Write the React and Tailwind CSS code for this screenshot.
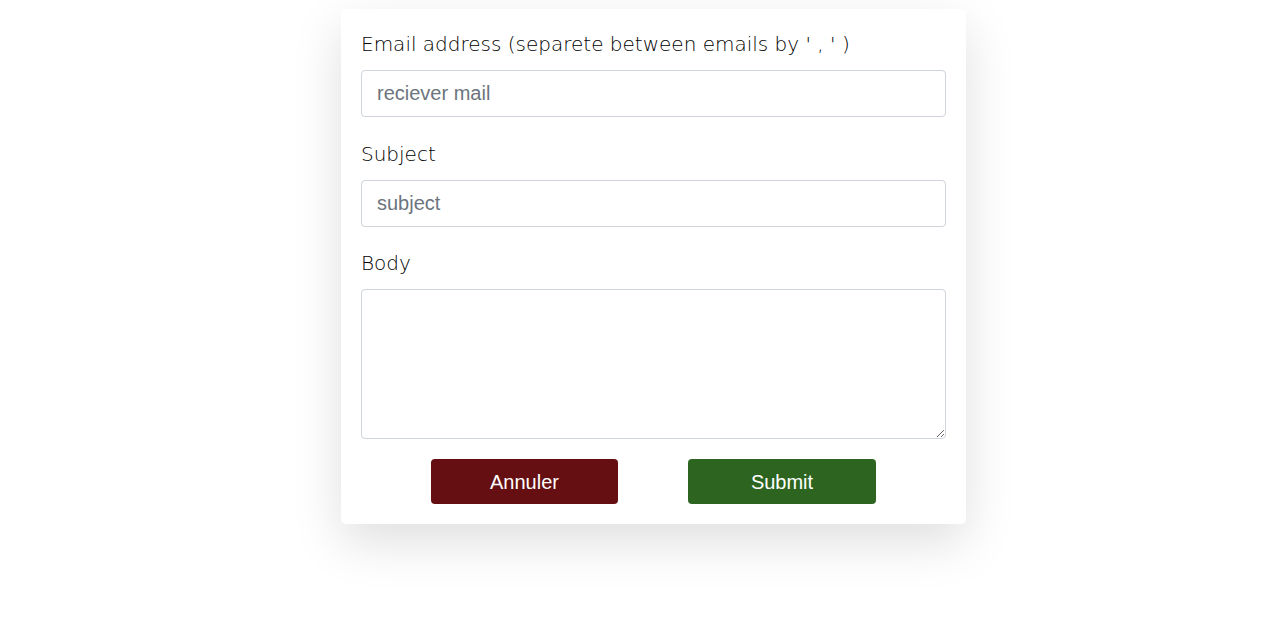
import React, { useState } from "react";

const label =
  "block font-['DejaVu_Sans',sans-serif] text-[20px] leading-[30px] font-extralight text-[#000] mb-[11px]";
const field =
  "w-full rounded-[4px] border border-[#ced4da] bg-white px-[15px] text-[20px] text-[#495057] placeholder:text-[#6c757d] focus:outline-none";

export default function App() {
  const [to, setTo] = useState("");
  const [subject, setSubject] = useState("");
  const [body, setBody] = useState("");

  return (
    <div className="min-h-[637px] bg-white flex justify-center pl-[31px] pt-[9px] font-['Liberation_Sans',Arial,sans-serif]">
      <div className="w-[625px] h-fit rounded-[5px] bg-white px-5 pt-[20px] pb-5 shadow-[0_18px_50px_rgba(0,0,0,0.13)]">
        <label className={label}>Email address (separete between emails by ' , ' )</label>
        <input
          type="text"
          value={to}
          onChange={(e) => setTo(e.target.value)}
          placeholder="reciever mail"
          className={field + " h-[47px]"}
        />

        <label className={label + " mt-[22px]"}>Subject</label>
        <input
          type="text"
          value={subject}
          onChange={(e) => setSubject(e.target.value)}
          placeholder="subject"
          className={field + " h-[47px]"}
        />

        <label className={label + " mt-[21px]"}>Body</label>
        <textarea
          value={body}
          onChange={(e) => setBody(e.target.value)}
          className={field + " block h-[150px] py-2"}
        />

        <div className="mt-[20px] flex justify-center gap-[70px]">
          <button className="h-[45px] w-[187px] rounded-[4px] bg-[#650f12] text-[20px] text-white">
            Annuler
          </button>
          <button className="h-[45px] w-[188px] rounded-[4px] bg-[#2d6520] text-[20px] text-white">
            Submit
          </button>
        </div>
      </div>
    </div>
  );
}
